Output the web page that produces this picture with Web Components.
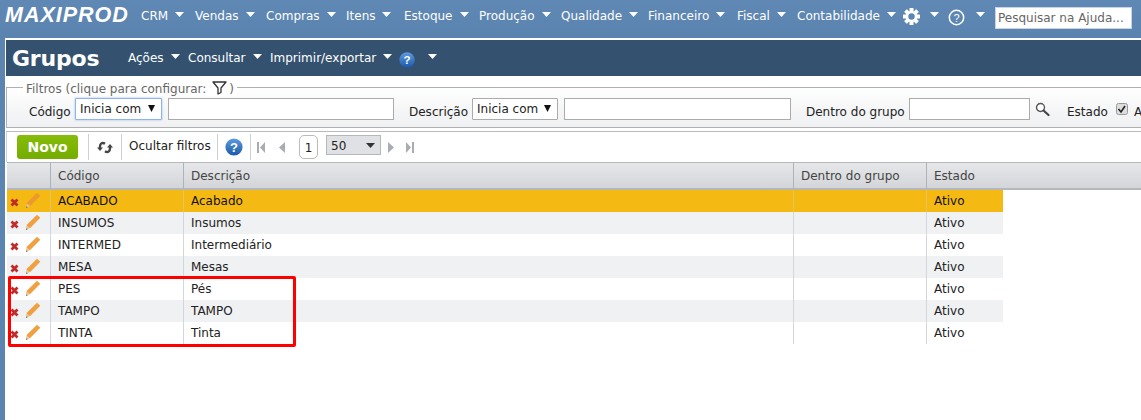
<!DOCTYPE html>
<html lang="pt">
<head>
<meta charset="utf-8">
<title>Grupos</title>
<style>
  html, body { margin: 0; height: 100%; overflow: hidden; background: #fff; }
  body { font: 12px "DejaVu Sans", "Liberation Sans", sans-serif; color: #222; }
</style>
</head>
<body>
<app-shell>
  <top-nav slot="nav"></top-nav>
  <page-title slot="main"></page-title>
  <filter-box slot="main"></filter-box>
  <grid-toolbar slot="main"></grid-toolbar>
  <data-grid slot="main"></data-grid>
</app-shell>

<script>
const caret = (color, w = 9, h = 5) =>
  `<svg width="${w}" height="${h}" viewBox="0 0 9 5" preserveAspectRatio="none"><path d="M0 0h9L4.500 5z" fill="${color}"/></svg>`;

const helpBlue = size => `<svg width="${size}" height="${size}" viewBox="0 0 18 18">
  <defs><linearGradient id="hb" x1="0" y1="0" x2="0" y2="1"><stop offset="0" stop-color="#5d9be0"/><stop offset="1" stop-color="#1b5aa8"/></linearGradient></defs>
  <circle cx="9" cy="9" r="8.600" fill="url(#hb)"/>
  <text x="9" y="13.600" text-anchor="middle" font-family="Liberation Sans, sans-serif" font-weight="700" font-size="13" fill="#fff">?</text></svg>`;

const gearTeeth = [0, 45, 90, 135].map(a =>
  `<rect x="6.500" y="0" width="4" height="17" rx=".5" fill="#fff" transform="rotate(${a} 8.500 8.500)"/>`).join('');

class AppShell extends HTMLElement {
  constructor() {
    super();
    this.attachShadow({ mode: 'open' });
    this.shadowRoot.innerHTML = `
      <style>
        :host { display: block; position: relative; height: 420px; background: #5b84b1; overflow: hidden; }
        .main { margin-left: 5px; height: 382px; background: #fff; padding: 2px 0 0 1px; box-sizing: border-box; }
        .frame { position: absolute; left: 8px; top: 276px; width: 288px; height: 71px; box-sizing: border-box;
                 border: 3px solid #f00; border-radius: 2px; pointer-events: none; }
      </style>
      <slot name="nav"></slot>
      <div class="main"><slot name="main"></slot></div>
      <div class="frame"></div>`;
  }
}

class NavItem extends HTMLElement {
  constructor() {
    super();
    this.attachShadow({ mode: 'open' });
    this.shadowRoot.innerHTML = `
      <style>
        :host { display: inline-flex; align-items: center; gap: 7px; white-space: nowrap; color: inherit; }
        svg { display: block; margin-top: -3px; }
      </style>
      <slot></slot>${caret('#fff')}`;
  }
}

class TopNav extends HTMLElement {
  constructor() {
    super();
    this.attachShadow({ mode: 'open' });
    const items = [['CRM', 54], ['Vendas', 71], ['Compras', 80], ['Itens', 58], ['Estoque', 75],
      ['Produção', 82], ['Qualidade', 87], ['Financeiro', 89], ['Fiscal', 60], ['Contabilidade', 105]];
    this.shadowRoot.innerHTML = `
      <style>
        :host { display: flex; align-items: center; height: 38px; padding: 0 0 0 5px; box-sizing: border-box;
                background: linear-gradient(#6088b4, #5a83b0); color: #fff; }
        .logo { width: 136px; flex: none; font: italic 700 21.500px "Liberation Sans", sans-serif; letter-spacing: 1px; margin-top: -8px; white-space: nowrap; }
        .items { display: flex; margin-top: -7px; }
        .items nav-item { flex: none; }
        .icons { display: flex; align-items: center; margin-top: -5px; }
        .icons svg { display: block; }
        input { width: 137px; height: 22px; box-sizing: border-box; margin: -2px 0 0 10px; border: 1px solid #c8d4e2; padding: 0 2px;
                font: inherit; font-size: 12px; color: #555; background: #fff; border-radius: 0; }
        input::placeholder { color: #666; opacity: 1; }
      </style>
      <div class="logo">MAXIPROD</div>
      <div class="items">${items.map(([t, w]) => `<nav-item style="width:${w}px">${t}</nav-item>`).join('')}</div>
      <div class="icons">
        <svg width="17" height="17" viewBox="0 0 17 17" style="margin-left:1px">${gearTeeth}<circle cx="8.500" cy="8.500" r="5.800" fill="#fff"/><circle cx="8.500" cy="8.500" r="3.200" fill="#5c85b1"/></svg>
        <span style="margin:-4px 0 0 10px;display:block">${caret('#fff')}</span>
        <svg width="17" height="17" viewBox="0 0 17 17" style="margin:2px 0 0 9px"><circle cx="8.500" cy="8.500" r="7.200" fill="none" stroke="#fff" stroke-width="1.500"/><text x="8.500" y="12.500" text-anchor="middle" font-family="Liberation Sans, sans-serif" font-size="11" fill="#fff">?</text></svg>
        <span style="margin:-4px 0 0 11px;display:block">${caret('#fff')}</span>
      </div>
      <input placeholder="Pesquisar na Ajuda...">`;
  }
}

class PageTitle extends HTMLElement {
  constructor() {
    super();
    this.attachShadow({ mode: 'open' });
    this.shadowRoot.innerHTML = `
      <style>
        :host { display: flex; align-items: center; height: 36px; background: #34526f; color: #fff; padding-left: 6px; }
        h1 { margin: 0; width: 116px; flex: none; font: 700 22px "DejaVu Sans", sans-serif; letter-spacing: -0.2px; }
        .menu { display: flex; align-items: center; }
        nav-item { flex: none; }
        .q { margin: 7px 0 0 -1px; display: block; }
      </style>
      <h1>Grupos</h1>
      <div class="menu">
        <nav-item style="width:60px">Ações</nav-item>
        <nav-item style="width:82px">Consultar</nav-item>
        <nav-item style="width:130px">Imprimir/exportar</nav-item>
        <span class="q">${helpBlue(16)}</span>
        <span style="display:block;margin:-6px 0 0 13px">${caret('#fff')}</span>
      </div>`;
  }
}

class FilterBox extends HTMLElement {
  constructor() {
    super();
    this.attachShadow({ mode: 'open' });
    this.shadowRoot.innerHTML = `
      <style>
        :host { display: block; margin-top: 11px; height: 41px; box-sizing: border-box; position: relative;
                border: 1px solid #b0b0b0; border-right: 0; background: linear-gradient(#fff 0, #f4f5f6 60%, #f0f1f2); }
        .legend { position: absolute; left: 16px; top: -7px; padding: 0 3px; background: #fff; color: #666; display: flex; align-items: center;
                  height: 15px; white-space: nowrap; }
        .legend svg { margin: -2px 2px 0 6px; display: block; }
        .row { display: flex; align-items: center; height: 100%; padding: 3px 0 0 22px; white-space: nowrap; box-sizing: border-box; }
        .row > * { flex: none; }
        .row > span { padding-top: 5px; }
        .select { display: flex; align-items: center; justify-content: space-between; height: 22px; box-sizing: border-box;
                  border: 1px solid #ababab; background: #fff; padding: 0 6px 1px 4px; border-radius: 1px; }
        .select.focus { border-color: #8fb4ea; box-shadow: 0 0 2px #8fb4ea; }
        .select svg { display: block; margin-top: -1px; }
        .input { height: 22px; box-sizing: border-box; border: 1px solid #ababab; background: #fff; }
      </style>
      <div class="legend">Filtros (clique para configurar:
        <svg width="15" height="14" viewBox="0 0 15 14"><path d="M1 1h13L9 7v4.500L6 13V7z" fill="none" stroke="#333" stroke-width="1.300" stroke-linejoin="round"/></svg>)</div>
      <div class="row">
        <span style="width:46px">Código</span>
        <div class="select focus" style="width:87px">Inicia com ${caret('#111', 7, 7)}</div>
        <div class="input" style="width:226px;margin-left:6px"></div>
        <span style="margin-left:15px;width:63px">Descrição</span>
        <div class="select" style="width:86px">Inicia com ${caret('#111', 7, 7)}</div>
        <div class="input" style="width:227px;margin-left:6px"></div>
        <span style="margin-left:15px;width:103px">Dentro do grupo</span>
        <div class="input" style="width:121px"></div>
        <svg width="15" height="15" viewBox="0 0 15 15" style="margin-left:5px;display:block"><circle cx="5.500" cy="5.500" r="4" fill="#fff" stroke="#555" stroke-width="1.400"/><path d="M8.500 8.500L13.500 13" stroke="#444" stroke-width="2.200" stroke-linecap="round"/></svg>
        <span style="margin-left:17px;width:49px">Estado</span>
        <svg width="12" height="12" viewBox="0 0 12 12" style="display:block"><rect x=".5" y=".5" width="11" height="11" rx="2" fill="#ddd" stroke="#999"/><path d="M2.500 6l2.500 3 4-6" fill="none" stroke="#222" stroke-width="1.600"/></svg>
        <span style="margin-left:6px">Ativo</span>
      </div>`;
  }
}

class GridToolbar extends HTMLElement {
  constructor() {
    super();
    this.attachShadow({ mode: 'open' });
    const edge = (d) => `<svg width="8" height="11" viewBox="0 0 8 11"><path d="${d}" fill="#a9adb2"/></svg>`;
    this.shadowRoot.innerHTML = `
      <style>
        :host { display: flex; align-items: center; height: 31px; margin-top: 3px; border-top: 1px solid #b8bcc0; border-left: 1px solid #d0d3d6;
                box-sizing: border-box; padding-left: 10px; background: #fff; white-space: nowrap; }
        :host > * { flex: none; }
        button { width: 61px; height: 24px; border: 0; border-radius: 3px; padding: 0; background: linear-gradient(#86bc0a, #74ad00); color: #fff;
                 font: 700 14px "DejaVu Sans", sans-serif; }
        .sep { width: 1px; height: 26px; background: #ccd0d4; flex: none; }
        svg { display: block; flex: none; }
        .page { width: 19px; height: 24px; box-sizing: border-box; border: 1px solid #bbb; border-radius: 5px; display: flex; align-items: center; justify-content: center; margin-left: 13px; padding-top: 2px; }
        .size { width: 55px; height: 20px; box-sizing: border-box; border: 1px solid #b4b8bc; background: #dfe1e4; margin: -4px 0 0 8px;
                display: flex; align-items: center; justify-content: space-between; padding: 1px 5px 0 4px; }
      </style>
      <button>Novo</button>
      <div class="sep" style="margin-left:10px"></div>
      <svg style="margin-left:8px" width="16" height="13" viewBox="0 0 16 13"><g fill="none" stroke="#444" stroke-width="2.400"><path d="M8 2.800C5.500 1 3 2.200 3 5.500V7"/><path d="M8 10.200c2.500 1.800 5 .6 5-2.700V6"/></g><path d="M0 6.500h6L3 10zM10 6.500h6L13 3z" fill="#444"/></svg>
      <div class="sep" style="margin-left:8px"></div>
      <span style="margin:-3px 0 0 7px;width:88px">Ocultar filtros</span>
      <div class="sep"></div>
      <span style="margin-left:7px;display:block">${helpBlue(18)}</span>
      <div class="sep" style="margin-left:7px"></div>
      <span style="margin-left:6px">${edge('M0 0h2v11H0zM8 0v11L3 5.500z')}</span>
      <span style="margin-left:13px">${edge('M7 0v11L1 5.500z')}</span>
      <div class="page">1</div>
      <div class="size">50 ${caret('#333', 9, 5)}</div>
      <span style="margin-left:6px">${edge('M1 0v11l6-5.500z')}</span>
      <span style="margin-left:11px">${edge('M0 0v11l5-5.500zM6 0h2v11H6z')}</span>`;
  }
}

class GridRow extends HTMLElement {
  constructor() {
    super();
    this.attachShadow({ mode: 'open' });
  }
  connectedCallback() {
    const cells = this.getAttribute('cells').split('|');
    this.shadowRoot.innerHTML = `
      <style>
        :host { display: grid; grid-template-columns: 44px 133px 610px 133px 76px; width: 996px; height: 22px; background: #fff; }
        :host(.alt) { background: #f0f1f3; }
        :host(.sel) { background: #f5b914; color: #111; }
        div { border-right: 1px solid #d4d7da; padding-left: 7px; line-height: 22px; box-sizing: border-box; white-space: nowrap; overflow: hidden; }
        :host(.sel) div { border-right-color: #e8c25a; }
        div:last-child { border-right: 0; }
        .actions { padding: 0 0 0 3px; display: flex; align-items: center; gap: 6px; }
        svg { display: block; flex: none; }
        .pencil { fill: #f0a040; }
        :host(.sel) .pencil { fill: #ec9a2c; }
      </style>
      <div class="actions">
        <svg style="margin-top:2px" width="9" height="9" viewBox="0 0 9 9"><path d="M1.500 1.500l6 6M7.500 1.500l-6 6" stroke="#c22a2a" stroke-width="2.800"/></svg>
        <svg style="margin-top:-2px" width="16" height="17" viewBox="0 0 16 17"><path class="pencil" d="M12 .8l3.300 3L5.200 14l-3.800.4.400-3.600z"/><path d="M1.800 11.500l3 2.600-3.800 1.800z" fill="#e8c79a"/><path d="M1.400 14.300L1 16l1.800-.8z" fill="#666"/></svg>
      </div>
      ${cells.map(c => `<div>${c}</div>`).join('')}`;
  }
}

class DataGrid extends HTMLElement {
  constructor() {
    super();
    this.attachShadow({ mode: 'open' });
    const rows = [['ACABADO', 'Acabado'], ['INSUMOS', 'Insumos'], ['INTERMED', 'Intermediário'], ['MESA', 'Mesas'],
      ['PES', 'Pés'], ['TAMPO', 'TAMPO'], ['TINTA', 'Tinta']];
    this.shadowRoot.innerHTML = `
      <style>
        :host { display: block; margin-left: 1px; }
        .head { display: grid; grid-template-columns: 44px 133px 610px 133px 1fr; height: 28px; box-sizing: border-box;
                border-top: 1px solid #b4b8bc; border-bottom: 2px solid #b4b8bc; background: linear-gradient(#e6e7e9, #d3d5d9); color: #444; }
        .head div { border-right: 1px solid #aeb3b8; padding-left: 7px; line-height: 26px; box-sizing: border-box; }
        .head div:last-child { border-right: 0; }
      </style>
      <div class="head"><div></div><div>Código</div><div>Descrição</div><div>Dentro do grupo</div><div>Estado</div></div>
      ${rows.map(([c, d], i) => `<grid-row class="${i === 0 ? 'sel' : i % 2 ? 'alt' : ''}" cells="${c}|${d}||Ativo"></grid-row>`).join('')}`;
  }
}

customElements.define('nav-item', NavItem);
customElements.define('top-nav', TopNav);
customElements.define('page-title', PageTitle);
customElements.define('filter-box', FilterBox);
customElements.define('grid-toolbar', GridToolbar);
customElements.define('grid-row', GridRow);
customElements.define('data-grid', DataGrid);
customElements.define('app-shell', AppShell);
</script>
</body>
</html>
